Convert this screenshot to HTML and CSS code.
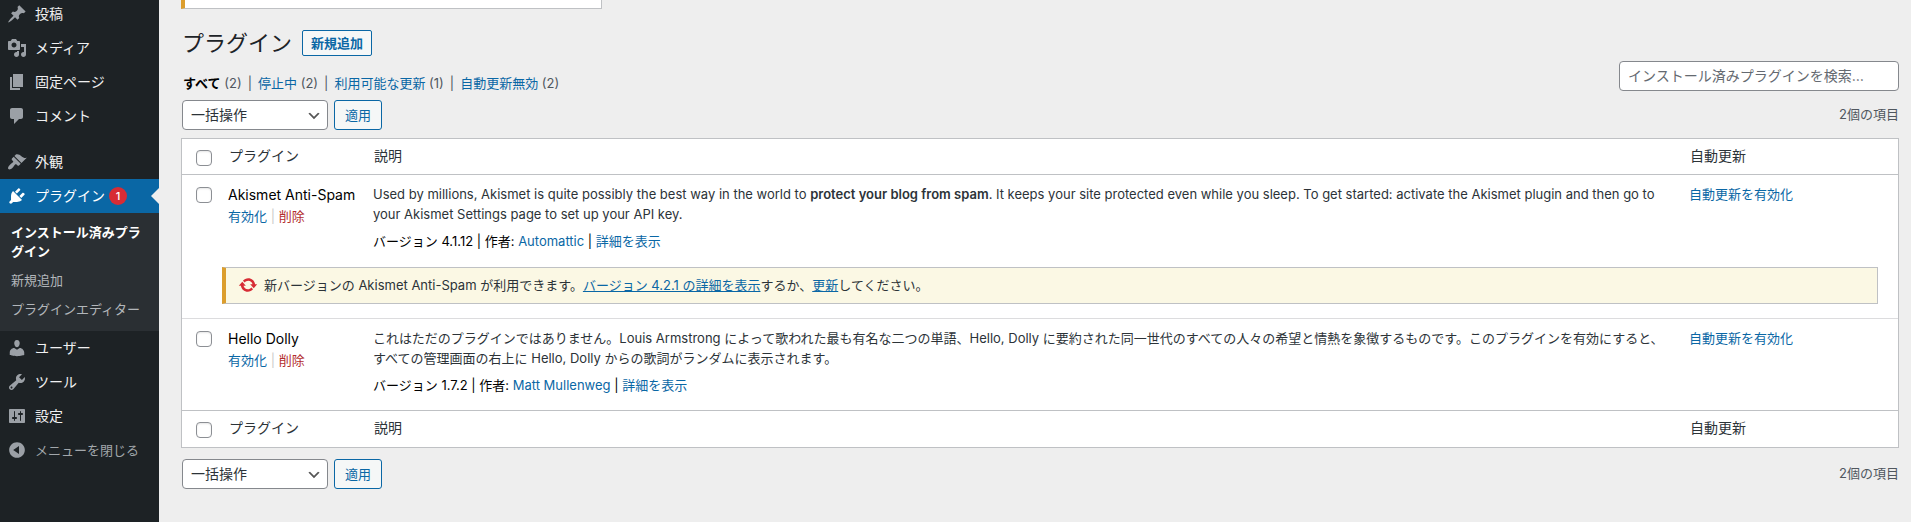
FILE: index.html
```html
<!DOCTYPE html>
<html lang="ja">
<head>
<meta charset="utf-8">
<title>プラグイン</title>
<link rel="stylesheet" href="styles.css">
</head>
<body>
<div class="layout">
  <nav class="sidebar" aria-label="メインメニュー">
    <ul class="menu">
      <li><a class="menu-item" href="#"><svg class="icon" viewBox="0 0 20 20"><path d="M10.44 3.02l1.82-1.82 6.36 6.35-1.83 1.82c-1.05-.68-2.48-.57-3.41.36l-.75.75c-.92.93-1.04 2.35-.35 3.41l-1.83 1.82-2.41-2.41-2.8 2.79c-.42.42-3.38 2.71-3.8 2.29s1.86-3.39 2.28-3.81l2.79-2.79L4.1 9.36l1.83-1.82c1.05.69 2.48.57 3.4-.36l.75-.75c.93-.92 1.05-2.35.36-3.41z"/></svg>投稿</a></li>
      <li><a class="menu-item" href="#"><svg class="icon" viewBox="0 0 20 20"><path d="M13 11V4c0-.55-.45-1-1-1h-1.67L9 1H5L3.67 3H2c-.55 0-1 .45-1 1v7c0 .55.45 1 1 1h10c.55 0 1-.45 1-1zM7 4.5c1.38 0 2.5 1.12 2.5 2.5S8.38 9.5 7 9.5 4.5 8.38 4.5 7 5.62 4.5 7 4.5zM14 6h5v10.5c0 1.38-1.12 2.5-2.5 2.5S14 17.88 14 16.5s1.12-2.5 2.5-2.5c.17 0 .34.02.5.05V9h-3V6zm-4 8.05V13h2v3.5c0 1.38-1.12 2.5-2.5 2.5S7 17.88 7 16.5 8.12 14 9.5 14c.17 0 .34.02.5.05z"/></svg>メディア</a></li>
      <li><a class="menu-item" href="#"><svg class="icon" viewBox="0 0 20 20"><path d="M6 15V2h10v13H6zm-1 1h8v2H3V5h2v11z"/></svg>固定ページ</a></li>
      <li><a class="menu-item" href="#"><svg class="icon" viewBox="0 0 20 20"><path d="M5 2h9c1.1 0 2 .9 2 2v7c0 1.1-.9 2-2 2h-2l-5 5v-5H5c-1.1 0-2-.9-2-2V4c0-1.1.9-2 2-2z"/></svg>コメント</a></li>
      <li class="separated"><a class="menu-item" href="#"><svg class="icon" viewBox="0 0 20 20"><path d="M14.48 11.06L7.41 3.99l1.5-1.5c.5-.56 2.3-.47 3.51.32 1.21.8 1.43 1.28 2.91 2.1 1.18.64 2.45 1.26 4.45.85zm-.71.71L6.7 4.7 4.93 6.47c-.39.39-.39 1.02 0 1.41l1.06 1.06c.39.39.39 1.03 0 1.42-.6.6-1.43 1.11-2.21 1.69-.35.26-.7.53-1.01.84C1.43 14.23.4 16.08 1.4 17.07c.99 1 2.84-.03 4.18-1.36.31-.31.58-.66.85-1.02.57-.78 1.08-1.61 1.69-2.21.39-.39 1.02-.39 1.41 0l1.06 1.06c.39.39 1.02.39 1.41 0z"/></svg>外観</a></li>
      <li>
        <a class="menu-item current" href="#"><svg class="icon" viewBox="0 0 20 20"><path d="M13.11 4.36L9.87 7.6 8 5.73l3.24-3.24c.35-.34 1.05-.2 1.56.32.52.51.66 1.21.31 1.55zm-8 1.77l.91-1.12 9.01 9.01-1.19.84c-.71.71-2.63 1.16-3.82 1.16H6.14L4.9 17.26c-.59.59-1.54.59-2.12 0-.59-.58-.59-1.53 0-2.12l1.24-1.24v-3.88c0-1.13.4-3.19 1.09-3.89zm7.26 3.97l3.24-3.24c.34-.35 1.04-.21 1.55.31.52.51.66 1.21.31 1.55l-3.24 3.25z"/></svg><span class="with-badge">プラグイン<span class="badge">1</span></span></a>
        <ul class="submenu">
          <li><a class="active" href="#">インストール済みプラグイン</a></li>
          <li><a href="#">新規追加</a></li>
          <li><a href="#">プラグインエディター</a></li>
        </ul>
      </li>
      <li><a class="menu-item" href="#"><svg class="icon" viewBox="0 0 20 20"><path d="M10 9.25c-2.27 0-2.73-3.44-2.73-3.44C7 4.02 7.82 2 9.97 2c2.16 0 2.98 2.02 2.71 3.81 0 0-.41 3.44-2.68 3.44zm0 2.57L12.72 10c2.39 0 4.52 2.33 4.52 4.53v2.49s-3.65 1.13-7.24 1.13c-3.65 0-7.24-1.13-7.24-1.13v-2.49c0-2.25 1.94-4.48 4.47-4.48z"/></svg>ユーザー</a></li>
      <li><a class="menu-item" href="#"><svg class="icon" viewBox="0 0 20 20"><path d="M16.68 9.77c-1.34 1.34-3.3 1.67-4.95.99l-5.41 6.52c-.99.99-2.59.99-3.58 0s-.99-2.59 0-3.57l6.52-5.42c-.68-1.65-.35-3.61.99-4.95 1.28-1.28 3.12-1.62 4.72-1.06l-2.89 2.89 2.82 2.82 2.86-2.87c.53 1.58.18 3.39-1.08 4.65zM3.81 16.21c.4.39 1.04.39 1.43 0 .4-.4.4-1.04 0-1.43-.39-.4-1.03-.4-1.43 0-.39.39-.39 1.03 0 1.43z"/></svg>ツール</a></li>
      <li><a class="menu-item" href="#"><svg class="icon" viewBox="0 0 20 20"><path d="M18 16V4c0-.55-.45-1-1-1H3c-.55 0-1 .45-1 1v12c0 .55.45 1 1 1h14c.55 0 1-.45 1-1zM8 11h1c.55 0 1 .45 1 1s-.45 1-1 1H8v1.5c0 .28-.22.5-.5.5s-.5-.22-.5-.5V13H6c-.55 0-1-.45-1-1s.45-1 1-1h1V5.5c0-.28.22-.5.5-.5s.5.22.5.5V11zm5-2h-1c-.55 0-1-.45-1-1s.45-1 1-1h1V5.5c0-.28.22-.5.5-.5s.5.22.5.5V7h1c.55 0 1 .45 1 1s-.45 1-1 1h-1v5.5c0 .28-.22.5-.5.5s-.5-.22-.5-.5V9z"/></svg>設定</a></li>
      <li><button class="menu-item collapse" type="button"><svg class="icon" viewBox="0 0 20 20"><path d="M10 2.16c4.33 0 7.84 3.51 7.84 7.84s-3.51 7.84-7.84 7.84S2.16 14.33 2.16 10 5.71 2.16 10 2.16zm2 11.72V6.12L6.18 9.97z"/></svg>メニューを閉じる</button></li>
    </ul>
  </nav>

  <main class="content">
    <div class="notice"></div>
    <header class="page-head">
      <h1>プラグイン</h1>
      <a class="button add-new" href="#">新規追加</a>
    </header>

    <div class="filter-row">
      <ul class="filters">
        <li><a class="active" href="#">すべて</a> <span>(2)</span></li>
        <li><a href="#">停止中</a> <span>(2)</span></li>
        <li><a href="#">利用可能な更新</a> <span>(1)</span></li>
        <li><a href="#">自動更新無効</a> <span>(2)</span></li>
      </ul>
      <input class="search" type="search" aria-label="インストール済みプラグインを検索" placeholder="インストール済みプラグインを検索…">
    </div>

    <div class="toolbar">
      <select class="bulk" aria-label="一括操作を選択"><option>一括操作</option></select>
      <button class="button" type="button">適用</button>
      <span class="count">2個の項目</span>
    </div>

    <table class="plugins">
      <thead>
        <tr>
          <td class="col-check"><input type="checkbox" aria-label="すべて選択"></td>
          <th class="col-name" scope="col">プラグイン</th>
          <th scope="col">説明</th>
          <th class="col-auto" scope="col">自動更新</th>
        </tr>
      </thead>
      <tbody>
        <tr class="has-update">
          <td class="col-check"><input type="checkbox" aria-label="Akismet Anti-Spam を選択"></td>
          <td>
            <strong class="name">Akismet Anti-Spam</strong>
            <div class="actions"><a href="#">有効化</a> <i>|</i> <a class="delete" href="#">削除</a></div>
          </td>
          <td>
            <p>Used by millions, Akismet is quite possibly the best way in the world to <strong>protect your blog from spam</strong>. It keeps your site protected even while you sleep. To get started: activate the Akismet plugin and then go to your Akismet Settings page to set up your API key.</p>
            <p class="meta">バージョン 4.1.12 | 作者: <a href="#">Automattic</a> | <a href="#">詳細を表示</a></p>
          </td>
          <td><a href="#">自動更新を有効化</a></td>
        </tr>
        <tr class="update-row">
          <td colspan="4">
            <div class="update-message"><svg class="icon" viewBox="0 0 20 20"><path d="M10.2 3.28c3.53 0 6.43 2.61 6.92 6h2.08l-3.5 4-3.5-4h2.32c-.45-1.97-2.21-3.45-4.32-3.45-1.45 0-2.73.71-3.54 1.78L4.95 5.66C6.23 4.2 8.11 3.28 10.2 3.28zm-.4 13.44c-3.52 0-6.43-2.61-6.92-6H.8l3.5-4c1.17 1.33 2.33 2.67 3.5 4H5.48c.45 1.97 2.21 3.45 4.32 3.45 1.45 0 2.73-.71 3.54-1.78l1.71 1.95c-1.28 1.46-3.15 2.38-5.25 2.38z"/></svg><p>新バージョンの Akismet Anti-Spam が利用できます。<a href="#">バージョン 4.2.1 の詳細を表示</a>するか、<a href="#">更新</a>してください。</p></div>
          </td>
        </tr>
        <tr>
          <td class="col-check"><input type="checkbox" aria-label="Hello Dolly を選択"></td>
          <td>
            <strong class="name">Hello Dolly</strong>
            <div class="actions"><a href="#">有効化</a> <i>|</i> <a class="delete" href="#">削除</a></div>
          </td>
          <td>
            <p>これはただのプラグインではありません。Louis Armstrong によって歌われた最も有名な二つの単語、Hello, Dolly に要約された同一世代のすべての人々の希望と情熱を象徴するものです。このプラグインを有効にすると、すべての管理画面の右上に Hello, Dolly からの歌詞がランダムに表示されます。</p>
            <p class="meta">バージョン 1.7.2 | 作者: <a href="#">Matt Mullenweg</a> | <a href="#">詳細を表示</a></p>
          </td>
          <td><a href="#">自動更新を有効化</a></td>
        </tr>
      </tbody>
      <tfoot>
        <tr>
          <td class="col-check"><input type="checkbox" aria-label="すべて選択"></td>
          <th scope="col">プラグイン</th>
          <th scope="col">説明</th>
          <th scope="col">自動更新</th>
        </tr>
      </tfoot>
    </table>

    <div class="toolbar bottom">
      <select class="bulk" aria-label="一括操作を選択"><option>一括操作</option></select>
      <button class="button" type="button">適用</button>
      <span class="count">2個の項目</span>
    </div>
  </main>
</div>
</body>
</html>
```
FILE: styles.css
```css
* { box-sizing: border-box; }

body {
  margin: 0;
  background: #eee;
  color: #2c3338;
  font: 13px/20px Inter, "Noto Sans CJK JP", sans-serif;
  overflow-x: hidden;
}

ul, p, h1 { margin: 0; padding: 0; }
ul { list-style: none; }
a { color: #0a67a5; text-decoration: none; }
button, input, select { font-family: inherit; margin: 0; }

.layout {
  display: grid;
  grid-template-columns: 159px minmax(0, 1fr);
  min-height: 100vh;
}

/* Sidebar */
.sidebar { background: #1d2225; }
.menu { margin-top: -3px; }

.menu-item {
  position: relative;
  display: flex;
  align-items: center;
  width: 100%;
  height: 34px;
  padding: 0 0 0 7px;
  gap: 8px;
  color: #f0f0f1;
  font-size: 14px;
  line-height: 20px;
}
.icon { flex: none; width: 20px; height: 20px; fill: #9ba0a6; }
.separated { margin-top: 12px; }

.menu-item.current { background: #0a67a5; color: #fff; }
.menu-item.current .icon { fill: #fff; }
.menu-item.current::after {
  content: "";
  position: absolute;
  right: 0;
  top: 9px;
  border: 8px solid transparent;
  border-left: 0;
  border-right-color: #eee;
}
.with-badge { display: flex; align-items: center; gap: 4px; }
.badge {
  min-width: 18px;
  height: 18px;
  border-radius: 9px;
  background: #d72c35;
  font-size: 11px;
  font-weight: 500;
  line-height: 18px;
  text-align: center;
}

.submenu { padding: 5px 0 7px; background: #2a2f33; }
.submenu a {
  display: block;
  padding: 5px 11px;
  color: #b2b6ba;
  line-height: 19px;
}
.submenu .active { color: #fff; font-weight: 600; }

.collapse {
  border: 0;
  background: none;
  color: #a2a7ab;
  font-size: 13px;
  cursor: pointer;
}

/* Main area */
.content { padding: 0 12px 0 22px; }

.notice {
  width: 421px;
  max-width: 100%;
  height: 9px;
  border: 1px solid #bfc1c4;
  border-top: 0;
  border-left: 4px solid #dc9e2d;
  background: #fff;
}

.page-head {
  display: flex;
  align-items: center;
  gap: 10px;
  padding: 19px 0 3px 1px;
}
h1 { color: #1d2327; font-size: 22px; font-weight: 400; line-height: 30px; }

.button {
  height: 30px;
  padding: 0 10px;
  border: 1px solid #0a67a5;
  border-radius: 3px;
  background: #f5f7f7;
  color: #0a67a5;
  font-size: 13px;
  line-height: 28px;
}
.add-new { height: 26px; padding: 0 8px; border-radius: 2px; font-weight: 600; line-height: 24px; }

.filter-row { display: flex; justify-content: space-between; height: 32px; }
.filters { display: flex; align-self: flex-end; padding-left: 2px; color: #50575e; }
.filters li + li::before { content: "|"; margin: 0 6px; }
.filters .active { color: #000; font-weight: 600; }

.search, .bulk {
  height: 30px;
  border: 1px solid #85888d;
  border-radius: 4px;
  background: #fff;
  color: #2c3338;
  font-size: 14px;
  outline: 0;
}
.search { width: 280px; padding: 0 8px 2px; }
.search::placeholder { color: #646970; opacity: 1; }

.toolbar {
  display: flex;
  align-items: center;
  gap: 6px;
  margin: 7px 0 8px;
  padding-left: 1px;
}
.toolbar.bottom { margin: 11px 0 0; }
.bulk {
  appearance: none;
  width: 146px;
  padding: 0 24px 1px 8px;
  background: #fff url("data:image/svg+xml,%3Csvg xmlns='http://www.w3.org/2000/svg' viewBox='0 0 20 20'%3E%3Cpath d='M5 6l5 5 5-5 2 1-7 7-7-7 2-1z' fill='%23555'/%3E%3C/svg%3E") no-repeat right 5px top 55%;
  background-size: 16px 16px;
}
.count { margin-left: auto; padding-bottom: 2px; color: #50575e; }

/* Plugin table */
.plugins {
  width: 100%;
  table-layout: fixed;
  border: 1px solid #bfc1c4;
  border-spacing: 0;
  background: #fff;
}
.plugins th, .plugins td { padding: 9px 10px 15px; text-align: left; vertical-align: top; }
.plugins th { padding-left: 11px; font-size: 14px; font-weight: 400; color: #2c3338; }
.plugins thead th, .plugins thead td { padding-top: 7px; padding-bottom: 8px; border-bottom: 1px solid #bfc1c4; }
.plugins tfoot th, .plugins tfoot td { padding-top: 7px; padding-bottom: 9px; border-top: 1px solid #bfc1c4; }
.plugins .has-update td { padding-bottom: 10px; }
.plugins .col-check { width: 36px; padding-left: 14px; padding-right: 0; }
.plugins .col-name { width: 145px; }
.plugins .col-auto { width: 219px; }

.plugins input {
  appearance: none;
  display: block;
  width: 16px;
  height: 16px;
  margin-top: 3px;
  border: 1px solid #8c8f94;
  border-radius: 4px;
  background: #fff;
  box-shadow: inset 0 1px 2px rgba(0, 0, 0, .1);
}
.plugins thead input, .plugins tfoot input { margin-top: 4px; }

.plugins strong { font-weight: 600; }
.plugins .name {
  display: block;
  padding-top: 1px;
  color: #000;
  font-size: 14px;
  font-weight: 400;
  white-space: nowrap;
}
.actions { padding-top: 1px; }
.actions i { color: #ccc; font-style: normal; }
.actions .delete { color: #b32d2e; }
.meta { padding-top: 7px; color: #000; }

.plugins .update-row td { padding: 6px 20px 14px 40px; border-bottom: 1px solid #dcdcde; }
.update-message {
  display: flex;
  align-items: center;
  gap: 6px;
  padding: 7px 12px 8px;
  border: 1px solid #bfc1c4;
  border-left: 4px solid #dc9e2d;
  background: #fbf8e4;
}
.update-message .icon { fill: #d72c35; }
.update-message a { text-decoration: underline; }
```
